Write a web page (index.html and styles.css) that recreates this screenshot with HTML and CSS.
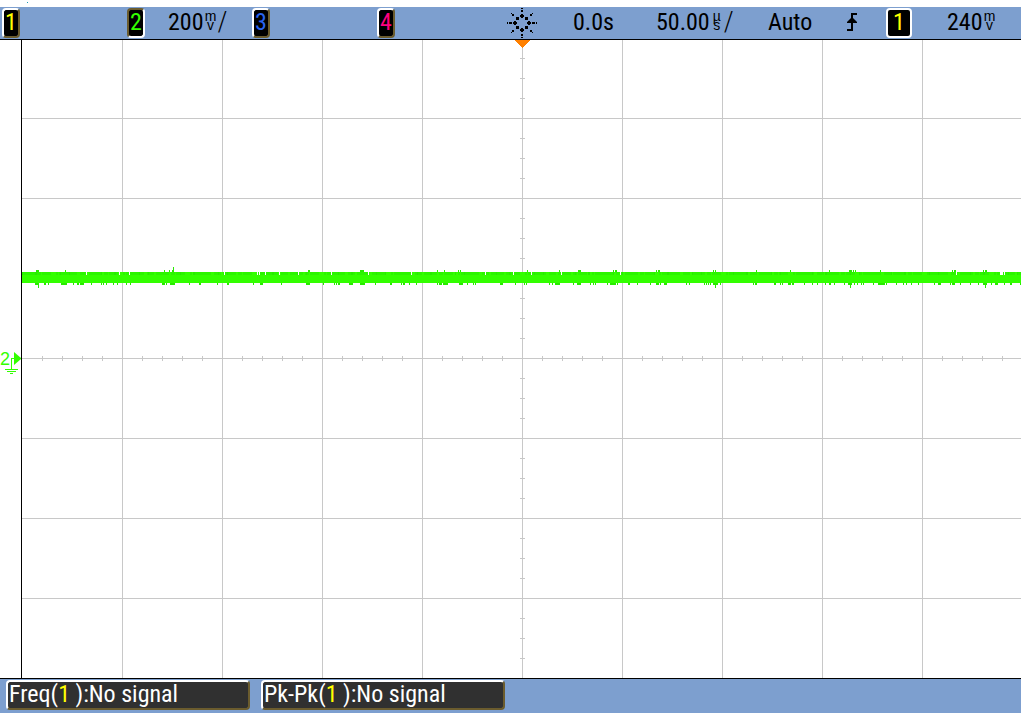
FILE: index.html
```html
<!DOCTYPE html>
<html lang="en">
<head>
<meta charset="utf-8">
<title>Oscilloscope</title>
<link rel="stylesheet" href="styles.css">
</head>
<body>
<div class="scope">
  <div class="strip"><span class="dot"></span></div>
  <header class="status">
    <button class="key key-1">1</button>
    <button class="key key-2">2</button>
    <span class="value">200<span class="unit"><span>m</span><span>v</span></span><span class="per">/</span></span>
    <button class="key key-3">3</button>
    <button class="key key-4">4</button>
    <svg class="sun" width="30" height="30" viewBox="0 0 30 30" aria-hidden="true">
      <g fill="#000" shape-rendering="crispEdges">
        <path d="M14 6h2v1h1v2h-1v1h-2v-1h-1v-2h1zM14 20h2v1h1v2h-1v1h-2v-1h-1v-2h1zM7 13h2v1h1v2h-1v1h-2v-1h-1v-2h1zM21 13h2v1h1v2h-1v1h-2v-1h-1v-2h1z"/>
        <path d="M9 9h3v3h-3zM18 9h3v3h-3zM9 18h3v3h-3zM18 18h3v3h-3z"/>
        <path d="M14 0h2v1h-2zM14 2h2v2h-2zM14 26h2v2h-2zM14 29h2v1h-2zM0 14h1v2h-1zM2 14h3v2h-3zM25 14h3v2h-3zM29 14h1v2h-1z"/>
        <path d="M4 5h1v1h-1zM5 6h2v2h-2zM25 5h1v1h-1zM23 6h2v2h-2zM4 24h1v1h-1zM5 22h2v2h-2zM25 24h1v1h-1zM23 22h2v2h-2z"/>
      </g>
    </svg>
    <span class="value">0.0s</span>
    <span class="value">50.00<span class="unit"><span>µ</span><span>s</span></span><span class="per">/</span></span>
    <span class="value">Auto</span>
    <svg class="edge" width="14" height="20" viewBox="0 0 14 20" aria-hidden="true">
      <path d="M1 18H6V2H11" fill="none" stroke="#000" stroke-width="2" shape-rendering="crispEdges"/>
      <path d="M5 6H7L11 10V11H1V10z" fill="#000"/>
    </svg>
    <button class="key key-trigger">1</button>
    <span class="value">240<span class="unit"><span>m</span><span>v</span></span></span>
  </header>

  <main class="screen">
    <div class="gutter">
      <svg width="21" height="40" viewBox="0 0 21 40">
        <text class="ground-label" x="0" y="26">2</text>
        <path d="M14 13L21 19V20L14 26z" fill="#33ff00"/>
        <path d="M14 19.500H11.500V30M5 30.500H18M7 32.500H16M10 34.500H13" fill="none" stroke="#33ff00" shape-rendering="crispEdges"/>
      </svg>
    </div>
    <svg class="plot" viewBox="0 0 999 638" preserveAspectRatio="none" shape-rendering="crispEdges" role="img" aria-label="Channel 2 waveform">
      <g fill="none" stroke="#c8c8c8">
        <path d="M100.500 0V638M200.500 0V638M300.500 0V638M400.500 0V638M500.500 0V638M600.500 0V638M700.500 0V638M800.500 0V638M900.500 0V638"/>
        <path d="M0 78.500H999M0 158.500H999M0 238.500H999M0 318.500H999M0 398.500H999M0 478.500H999M0 558.500H999"/>
        <path d="M20 318.500H999" stroke-width="5" stroke-dasharray="1 19"/>
        <path d="M500.500 18V638" stroke-width="5" stroke-dasharray="1 19"/>
      </g>
      <path d="M493 0H508L501 8H500z" fill="#ff8000"/>
      <path d="M0 232H999V243H0z" fill="#33ff00"/>
      <g fill="none" stroke="#28eb00">
        <path stroke-width="3" stroke="#2cf400" d="M0 233.500H999" stroke-dasharray="13 2 4 1 9 5 2 1 18 3 7 2"/>
        <path stroke-width="3" d="M0 233.500H999" stroke-dasharray="1 12 2 23 1 8 1 31"/>
        <path stroke-width="2" d="M14 231h3M43 231h1M142 231h1M147 231h1M150 231h1M286 231h2M338 231h4M415 231h1M422 231h1M436 231h1M438 231h1M505 231h1M537 231h1M556 231h3M591 231h1M593 231h2M634 231h1M636 231h2M691 231h1M693 231h1M734 231h1M768 231h1M807 231h1M827 231h3M831 231h1M833 231h1M858 231h1M930 231h1M932 231h2M961 231h1M963 231h2"/>
        <path stroke-width="2" d="M13 244h4M22 244h2M26 244h1M39 244h6M51 244h1M55 244h2M58 244h4M69 244h1M79 244h1M81 244h1M84 244h1M91 244h1M95 244h1M104 244h1M108 244h1M140 244h3M144 244h1M148 244h5M167 244h1M177 244h2M195 244h1M205 244h2M231 244h1M238 244h3M259 244h1M284 244h4M301 244h1M312 244h1M314 244h1M316 244h2"/>
        <path stroke-width="2" d="M327 244h4M338 244h5M353 244h1M368 244h2M379 244h1M381 244h2M387 244h1M394 244h1M415 244h1M417 244h3M421 244h5M437 244h4M445 244h1M451 244h1M453 244h1M478 244h3M493 244h1M502 244h1M504 244h1M527 244h1M530 244h1M533 244h5M551 244h1M555 244h4M568 244h1M571 244h1M573 244h1M585 244h1M588 244h6M595 244h1M606 244h2M615 244h1M628 244h1M634 244h3M638 244h1M642 244h3"/>
        <path stroke-width="2" d="M664 244h1M667 244h1M682 244h1M684 244h1M686 244h1M688 244h1M691 244h5M698 244h1M731 244h1M733 244h2M752 244h2M758 244h1M760 244h1M766 244h3M770 244h2M782 244h1M790 244h1M795 244h1M803 244h1M807 244h2M812 244h1M822 244h1M826 244h4M832 244h1M835 244h1M839 244h1M841 244h1M851 244h1M856 244h7M864 244h1M874 244h1M881 244h1M884 244h1M889 244h1M896 244h1M912 244h1M916 244h3M928 244h1M930 244h3M938 244h1M948 244h1M956 244h1M961 244h4M969 244h1M973 244h3M982 244h1M988 244h2M998 244h1"/>
        <path d="M151.500 227V232M16.500 243V248M693.500 243V248M828.500 243V248M963.500 243V248"/>
      </g>
      <path fill="none" stroke="#fff" stroke-width="3" d="M64 233.500h1M97 233.500h1M107 233.500h1M202 233.500h1M235 233.500h1M237 233.500h1M243 233.500h1M257 233.500h1M276 233.500h1M309 233.500h1M346 233.500h1M389 233.500h1M463 233.500h1M491 233.500h1M509 233.500h1M539 233.500h1M598 233.500h1M934 233.500h1M978 233.500h3M982 233.500h1"/>
    </svg>
  </main>

  <footer class="measures">
    <button class="measure">Freq(<span class="source">1</span> ):No signal</button>
    <button class="measure">Pk-Pk(<span class="source">1</span> ):No signal</button>
  </footer>
</div>
</body>
</html>
```
FILE: styles.css
```css
* { box-sizing: border-box; }
body { margin: 0; background: #fff; }
.scope {
  display: flex;
  flex-direction: column;
  height: 100vh;
  font-family: "Liberation Sans Narrow", "Arial Narrow", "Roboto Condensed", "Liberation Sans", sans-serif;
  font-size: 24px;
  line-height: 28px;
  color: #000;
}
.strip { height: 7px; padding: 2px 27px; }
.dot { display: block; width: 1px; height: 1px; background: #1c9cb4; }
.status {
  display: grid;
  grid-template-columns: 125fr 41fr 84fr 125fr 130fr 66fr 83fr 112fr 78fr 40fr 61fr 74fr;
  align-items: center;
  justify-items: start;
  height: 33px;
  padding-left: 2px;
  background: #7d9fcf;
  border-bottom: 1px solid #000;
}
.status > * { min-width: 0; }
.value { display: flex; align-items: center; padding-bottom: 2px; white-space: nowrap; }
.unit {
  display: flex;
  flex-direction: column;
  align-items: center;
  width: 14px;
  padding-bottom: 2px;
  font-family: "Liberation Sans", sans-serif;
  font-size: 14px;
  line-height: 9px;
}
.per { font-size: 28px; font-weight: 300; }
.edge { margin-bottom: 2px; }
.key {
  width: 18px;
  height: 30px;
  padding: 0 0 2px;
  border: 2px solid;
  border-color: #fff #6b5c2e #6b5c2e #fff;
  border-radius: 4px;
  background: #000;
  font: inherit;
  line-height: 24px;
  text-align: center;
}
.key-1 { color: #ff0; }
.key-2 { color: #3f0; border-color: #6b5c2e #fff #fff #6b5c2e; }
.key-3 { color: #2864f0; }
.key-4 { color: #ff0080; }
.key-trigger { width: 26px; color: #ff0; border-color: #fff; }
.screen { display: flex; flex: 1; min-height: 0; }
.gutter {
  display: flex;
  align-items: center;
  width: 22px;
  border-right: 1px solid #000;
}
.ground-label { font: 18px "Liberation Sans", sans-serif; fill: #3f0; }
.plot { display: block; flex: 1; min-width: 0; height: 100%; }
.measures {
  display: flex;
  gap: 11px;
  height: 35px;
  padding: 1px 6px 3px;
  background: #7d9fcf;
  border-top: 1px solid #000;
}
.measure {
  flex: 0 1 244px;
  padding: 0 1px 2px;
  border: 2px solid;
  border-color: #fff #6b5c2e #6b5c2e #fff;
  border-radius: 4px;
  background: #303030;
  color: #fff;
  font: inherit;
  line-height: 24px;
  text-align: left;
  white-space: nowrap;
}
.source { color: #ff0; }
```
